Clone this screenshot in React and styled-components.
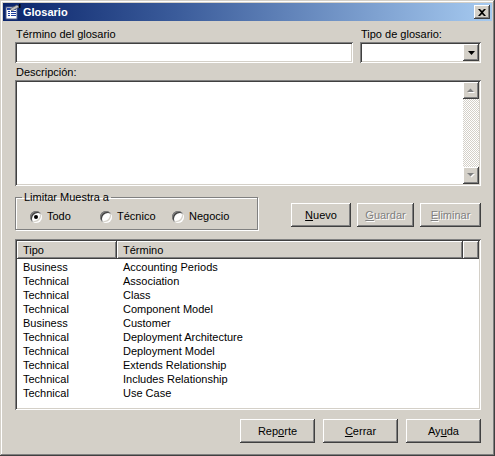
import React from "react";
import styled, { createGlobalStyle, css } from "styled-components";

//*----------------------------------------------------------------------------------------
// Estilos globales y biseles clasicos
const Global = createGlobalStyle`
  html, body { margin: 0; padding: 0; background: #d4d0c8; }
  * { box-sizing: border-box; }
  body { font-family: "Liberation Sans", Arial, sans-serif; font-size: 11px; color: #000; }
`;

const raised = css`
  background: #d4d0c8;
  box-shadow: inset -1px -1px #404040, inset 1px 1px #ffffff,
    inset -2px -2px #808080, inset 2px 2px #d4d0c8;
`;

const sunken = css`
  background: #ffffff;
  box-shadow: inset 1px 1px #808080, inset -1px -1px #ffffff,
    inset 2px 2px #404040, inset -2px -2px #d4d0c8;
`;
//*----------------------------------------------------------------------------------------

const Window = styled.div`
  width: 495px;
  height: 456px;
  padding: 3px;
  background: #d4d0c8;
  display: flex;
  flex-direction: column;
  box-shadow: inset -1px -1px #404040, inset 1px 1px #d4d0c8,
    inset -2px -2px #808080, inset 2px 2px #ffffff;
`;

const TitleBar = styled.div`
  height: 18px;
  display: flex;
  align-items: center;
  gap: 2px;
  padding: 0 2px 0 2px;
  background: linear-gradient(to right, #0a246a 0%, #3a5b9a 35%, #a6caf0 100%);
  color: #fff;
  font-weight: bold;
  font-size: 11px;
`;

const TitleText = styled.span`
  flex: 1;
  line-height: 18px;
`;

const CloseBtn = styled.div`
  ${raised};
  width: 16px;
  height: 14px;
  display: flex;
  align-items: center;
  justify-content: center;
`;

const Content = styled.div`
  flex: 1;
  display: flex;
  flex-direction: column;
  padding: 7px 11px 0 12px;
`;

const TopGrid = styled.div`
  display: grid;
  grid-template-columns: 338px 1fr;
  column-gap: 7px;
`;

const Label = styled.div`
  line-height: 13px;
  margin-bottom: 1px;
  margin-top: ${(p) => p.mt || 0}px;
  padding-left: 1px;
`;

const Field = styled.div`
  ${sunken};
  height: 21px;
  display: flex;
  justify-content: flex-end;
  padding: 2px;
`;

const ArrowBtn = styled.div`
  ${raised};
  width: 16px;
  height: 17px;
  display: flex;
  align-items: center;
  justify-content: center;
`;

const TextArea = styled.div`
  ${sunken};
  height: 106px;
  display: flex;
  justify-content: flex-end;
  padding: 2px;
`;

const ScrollBar = styled.div`
  width: 16px;
  display: flex;
  flex-direction: column;
  justify-content: space-between;
  background: repeating-conic-gradient(#d4d0c8 0 25%, #ffffff 0 50%) 0 0 / 2px 2px;
`;

const MidRow = styled.div`
  display: flex;
  align-items: flex-start;
  margin-top: 5px;
`;

const Group = styled.fieldset`
  width: 243px;
  margin: 0;
  padding: 6px 0 6px 6px;
  border: 1px solid #808080;
  box-shadow: inset 1px 1px #ffffff, 1px 1px #ffffff;
`;

const Legend = styled.legend`
  padding: 0 2px;
  line-height: 13px;
`;

const RadioRow = styled.div`
  display: flex;
  margin-left: 8px;
`;

const RadioItem = styled.label`
  display: flex;
  align-items: center;
  gap: 5px;
  width: ${(p) => p.w}px;
  line-height: 13px;
`;

const Radio = styled.span`
  width: 12px;
  height: 12px;
  border-radius: 50%;
  background: #fff;
  position: relative;
  box-shadow: inset 1px 1px #808080, inset -1px -1px #ffffff,
    inset 2px 2px #404040, inset -2px -2px #d4d0c8;
  ${(p) =>
    p.checked &&
    css`
      &::after {
        content: "";
        position: absolute;
        left: 4px;
        top: 4px;
        width: 4px;
        height: 4px;
        border-radius: 50%;
        background: #000;
      }
    `}
`;

const ButtonGroup = styled.div`
  margin-left: auto;
  margin-top: 12px;
  display: flex;
  gap: 6px;
`;

const Button = styled.div`
  ${raised};
  width: ${(p) => p.w}px;
  height: 24px;
  display: flex;
  align-items: center;
  justify-content: center;
  color: ${(p) => (p.disabled ? "#808080" : "#000")};
  text-shadow: ${(p) => (p.disabled ? "1px 1px #ffffff" : "none")};
`;

const ListBox = styled.div`
  ${sunken};
  margin-top: 9px;
  height: 171px;
  padding: 2px;
`;

const Header = styled.div`
  display: grid;
  grid-template-columns: 100px 346px 1fr;
  height: 18px;
`;

const HeadCell = styled.div`
  ${raised};
  padding-left: 6px;
  line-height: 18px;
`;

const Row = styled.div`
  display: grid;
  grid-template-columns: 100px 346px 1fr;
  height: 14px;
  line-height: 14px;
  padding-top: 1px;
`;

const Cell = styled.div`
  padding-left: 6px;
  white-space: nowrap;
`;

const Footer = styled.div`
  display: flex;
  justify-content: flex-end;
  gap: 8px;
  margin-top: 9px;
`;

//*----------------------------------------------------------------------------------------
// Iconos
const DocIcon = () => (
  <svg width="16" height="16" viewBox="0 0 16 16">
    <rect x="1" y="3" width="11" height="12" fill="#fff" stroke="#4a5a8a" />
    <rect x="2" y="4" width="9" height="2" fill="#2a4aa8" />
    <rect x="3" y="7" width="2" height="1" fill="#1c3c9c" />
    <rect x="6" y="7" width="5" height="1" fill="#1c3c9c" />
    <rect x="3" y="9" width="2" height="1" fill="#1c3c9c" />
    <rect x="6" y="9" width="5" height="1" fill="#1c3c9c" />
    <rect x="3" y="11" width="2" height="1" fill="#1c3c9c" />
    <rect x="6" y="11" width="5" height="1" fill="#1c3c9c" />
    <path d="M5 5 L12 1 L14 3 L7 7 Z" fill="#c0c0c0" stroke="#606060" strokeWidth="0.7" />
    <rect x="14" y="0" width="1.5" height="4" fill="#000" />
  </svg>
);

const CloseIcon = () => (
  <svg width="8" height="7" viewBox="0 0 8 7">
    <path d="M0 0h2l2 2 2-2h2L5 3.5 8 7H6L4 5 2 7H0l3-3.5z" fill="#000" />
  </svg>
);

const Down = () => (
  <svg width="7" height="4" viewBox="0 0 7 4">
    <path d="M0 0h7L3.5 4z" fill="#000" />
  </svg>
);

const UpGray = () => (
  <svg width="8" height="5" viewBox="0 0 8 5">
    <path d="M1 5h7L4.5 1.5z" fill="#fff" />
    <path d="M0 4h7L3.5 0.5z" fill="#808080" />
  </svg>
);

const DownGray = () => (
  <svg width="8" height="5" viewBox="0 0 8 5">
    <path d="M1 1h7L4.5 4.5z" fill="#fff" />
    <path d="M0 0h7L3.5 3.5z" fill="#808080" />
  </svg>
);
//*----------------------------------------------------------------------------------------

const items = [
  ["Business", "Accounting Periods"],
  ["Technical", "Association"],
  ["Technical", "Class"],
  ["Technical", "Component Model"],
  ["Business", "Customer"],
  ["Technical", "Deployment Architecture"],
  ["Technical", "Deployment Model"],
  ["Technical", "Extends Relationship"],
  ["Technical", "Includes Relationship"],
  ["Technical", "Use Case"],
];

const App = () => {
  return (
    <>
      <Global />
      <Window>
        <TitleBar>
          <DocIcon />
          <TitleText>Glosario</TitleText>
          <CloseBtn>
            <CloseIcon />
          </CloseBtn>
        </TitleBar>
        <Content>
          <TopGrid>
            <div>
              <Label>Término del glosario</Label>
              <Field />
            </div>
            <div>
              <Label>Tipo de glosario:</Label>
              <Field>
                <ArrowBtn>
                  <Down />
                </ArrowBtn>
              </Field>
            </div>
          </TopGrid>
          <Label mt={3}>Descripción:</Label>
          <TextArea>
            <ScrollBar>
              <ArrowBtn>
                <UpGray />
              </ArrowBtn>
              <ArrowBtn>
                <DownGray />
              </ArrowBtn>
            </ScrollBar>
          </TextArea>
          <MidRow>
            <Group>
              <Legend>Limitar Muestra a</Legend>
              <RadioRow>
                <RadioItem w={70}>
                  <Radio checked />
                  Todo
                </RadioItem>
                <RadioItem w={72}>
                  <Radio />
                  Técnico
                </RadioItem>
                <RadioItem w={70}>
                  <Radio />
                  Negocio
                </RadioItem>
              </RadioRow>
            </Group>
            <ButtonGroup>
              <Button w={60}>
                <span><u>N</u>uevo</span>
              </Button>
              <Button w={57} disabled>
                <span><u>G</u>uardar</span>
              </Button>
              <Button w={61} disabled>
                <span><u>E</u>liminar</span>
              </Button>
            </ButtonGroup>
          </MidRow>
          <ListBox>
            <Header>
              <HeadCell>Tipo</HeadCell>
              <HeadCell>Término</HeadCell>
              <HeadCell />
            </Header>
            {items.map(([tipo, termino]) => (
              <Row key={termino}>
                <Cell>{tipo}</Cell>
                <Cell>{termino}</Cell>
              </Row>
            ))}
          </ListBox>
          <Footer>
            <Button w={75}>
              <span>Rep<u>o</u>rte</span>
            </Button>
            <Button w={75}>
              <span><u>C</u>errar</span>
            </Button>
            <Button w={75}>
              <span>Ay<u>u</u>da</span>
            </Button>
          </Footer>
        </Content>
      </Window>
    </>
  );
};

export default App;
